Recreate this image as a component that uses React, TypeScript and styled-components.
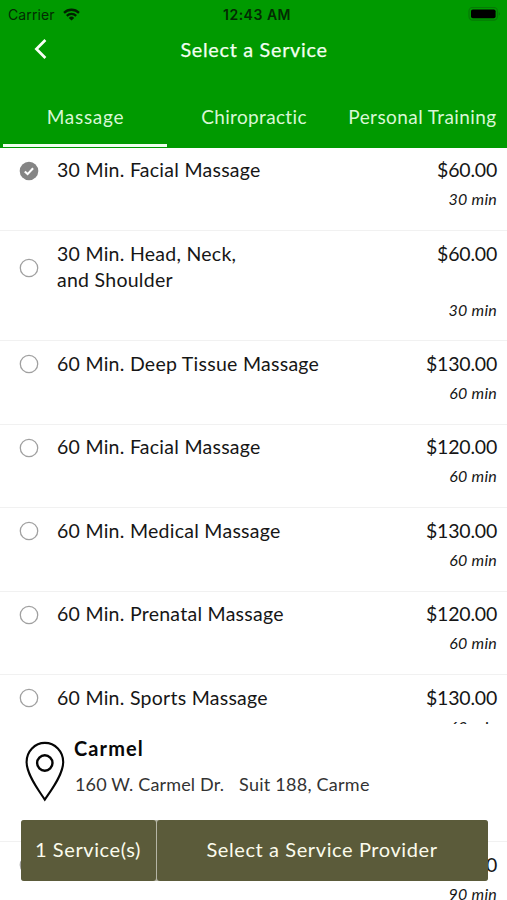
import React from "react";
import styled, { createGlobalStyle } from "styled-components";

const GlobalStyle = createGlobalStyle`
  * { box-sizing: border-box; }
  body { margin: 0; background: #fff; }
  button { font: inherit; color: inherit; background: none; border: 0; padding: 0; }
`;

const Screen = styled.div`
  position: relative;
  width: 507px;
  height: 900px;
  overflow: hidden;
  background: #fff;
  color: #161616;
  font-family: Lato, sans-serif;
`;

const Header = styled.header`
  height: 147.5px;
  background: #009a00;
  color: #f2fff0;
`;

const StatusBar = styled.div`
  display: grid;
  grid-template-columns: 1fr auto 1fr;
  align-items: center;
  height: 28px;
  padding: 0 6px 0 8px;
  font: 400 14px Inter, sans-serif;
  color: #032b03;
`;

const Carrier = styled.div`
  display: flex;
  align-items: center;
  gap: 8px;
  letter-spacing: 0.1px;
`;

const Clock = styled.div`
  font-weight: 600;
  letter-spacing: 0.5px;
  padding-left: 5px;
`;

const BatteryIcon = styled.svg`
  justify-self: end;
`;

const NavBar = styled.div`
  display: grid;
  grid-template-columns: 80px 1fr 80px;
  align-items: center;
  height: 42px;
`;

const BackButton = styled.button`
  display: flex;
  padding-left: 33px;
`;

const Title = styled.h1`
  margin: 0;
  padding-left: 1px;
  text-align: center;
  font-size: 19.8px;
  font-weight: 400;
  letter-spacing: 0.72px;
  line-height: 28px;
  -webkit-text-stroke: 0.25px currentColor;
`;

const Tabs = styled.nav`
  display: grid;
  grid-template-columns: 170px 167px 170px;
  height: 77.5px;
`;

const Tab = styled.button<{ $active?: boolean; $spacing: number }>`
  display: flex;
  align-items: flex-end;
  justify-content: center;
  height: 76.5px;
  margin: 0 3px;
  padding: 0 0 15px 1px;
  border-bottom: 3px solid ${(p) => (p.$active ? "#f0fff0" : "transparent")};
  font-size: 19px;
  line-height: 24px;
  letter-spacing: ${(p) => p.$spacing}px;
  white-space: nowrap;
  color: #d9f7d5;
`;

const ServiceList = styled.main`
  display: flex;
  flex-direction: column;
`;

const ServiceRow = styled.div<{ $tall?: boolean }>`
  display: grid;
  grid-template-columns: 57px 1fr 110px;
  flex: none;
  height: ${(p) => (p.$tall ? 110 : 83.5)}px;
  padding: 9.5px 10px 0 0;
  border-bottom: 1px solid #f1f1f1;
`;

const RadioSlot = styled.div<{ $tall?: boolean }>`
  padding: ${(p) => (p.$tall ? 17 : 3.5)}px 0 0 19px;
  svg { display: block; }
`;

const ServiceName = styled.div`
  font-size: 19.5px;
  line-height: 26.5px;
  letter-spacing: 0.27px;
  white-space: pre-line;
`;

const PriceColumn = styled.div<{ $tall?: boolean }>`
  display: flex;
  flex-direction: column;
  align-items: flex-end;
  gap: ${(p) => (p.$tall ? 32.5 : 5.7)}px;
`;

const Price = styled.div`
  font-size: 19.5px;
  line-height: 26.5px;
  letter-spacing: -0.2px;
`;

const Duration = styled.div`
  font-size: 16px;
  font-style: italic;
  line-height: 20px;
  letter-spacing: 0.22px;
`;

const BookingPanel = styled.section`
  position: absolute;
  left: 0;
  right: 0;
  top: 724px;
`;

const Location = styled.div`
  display: flex;
  height: 96px;
  padding: 12px 0 0 24px;
  gap: 8px;
  background: #fff;
`;

const PinIcon = styled.svg`
  flex: none;
  margin-top: 5px;
`;

const LocationName = styled.div`
  font-size: 20px;
  font-weight: 700;
  line-height: 24px;
  letter-spacing: 1.1px;
  color: #080808;
`;

const Address = styled.div`
  display: flex;
  gap: 15px;
  margin: 12px 0 0 1px;
  font-size: 18px;
  line-height: 24px;
  letter-spacing: 0.15px;
  color: #333;

  span + span { letter-spacing: 0.25px; }
`;

const Actions = styled.div`
  display: grid;
  grid-template-columns: 135px 331px;
  gap: 1px;
  width: 467px;
  margin-left: 20.5px;
  background: #b5b5a5;
  border-radius: 3px;
`;

const ActionButton = styled.button`
  height: 61px;
  padding-bottom: 4px;
  border-radius: 3px;
  background: #5b5b3a;
  color: #fbfbed;
  font-size: 20px;
  letter-spacing: 0.6px;
`;

interface Service {
  name: string;
  price: string;
  duration: string;
  selected?: boolean;
  tall?: boolean;
}

const services: Service[] = [
  { name: "30 Min. Facial Massage", price: "$60.00", duration: "30 min", selected: true },
  { name: "30 Min. Head, Neck,\nand Shoulder", price: "$60.00", duration: "30 min", tall: true },
  { name: "60 Min. Deep Tissue Massage", price: "$130.00", duration: "60 min" },
  { name: "60 Min. Facial Massage", price: "$120.00", duration: "60 min" },
  { name: "60 Min. Medical Massage", price: "$130.00", duration: "60 min" },
  { name: "60 Min. Prenatal Massage", price: "$120.00", duration: "60 min" },
  { name: "60 Min. Sports Massage", price: "$130.00", duration: "60 min" },
  { name: "", price: "", duration: "" },
  { name: "", price: "0", duration: "90 min" },
];

function Radio({ selected }: { selected?: boolean }) {
  return (
    <svg width="20" height="20" viewBox="0 0 20 20" fill="none">
      {selected ? (
        <>
          <circle cx="10" cy="10" r="9.3" fill="#858585" />
          <path d="M5.8 10.4l2.8 2.7 5.5-5.9" stroke="#fff" strokeWidth="2.1" />
        </>
      ) : (
        <circle cx="10" cy="10" r="8.7" stroke="#a0a0a0" strokeWidth="1.3" />
      )}
    </svg>
  );
}

export default function App() {
  return (
    <Screen>
      <GlobalStyle />
      <Header>
        <StatusBar>
          <Carrier>
            Carrier
            <svg width="17" height="13" viewBox="0 0 17 13" fill="none" stroke="#002000" strokeWidth="2.3">
              <path d="M1 4.8a10.8 10.8 0 0 1 15 0" />
              <path d="M3.8 7.8a6.8 6.8 0 0 1 9.4 0" />
              <path d="M8.5 12.6L5.8 9.9a3.9 3.9 0 0 1 5.4 0z" fill="#002000" stroke="none" />
            </svg>
          </Carrier>
          <Clock>12:43 AM</Clock>
          <BatteryIcon width="33" height="15" viewBox="0 0 33 15">
            <rect x="1" y="0.5" width="28.4" height="12.7" rx="3.6" fill="none" stroke="#067a06" strokeWidth="1.2" />
            <rect x="3" y="2.4" width="24.6" height="8.8" rx="1.8" fill="#000" />
            <path d="M30.8 4.8q1.8 2 0 4z" fill="#067006" />
          </BatteryIcon>
        </StatusBar>
        <NavBar>
          <BackButton aria-label="Back">
            <svg width="14" height="22" viewBox="0 0 14 22" fill="none" stroke="#f8fff6" strokeWidth="2.7">
              <path d="M12.4 2L3.4 11l9 9" />
            </svg>
          </BackButton>
          <Title>Select a Service</Title>
        </NavBar>
        <Tabs>
          <Tab $active $spacing={0.7}>Massage</Tab>
          <Tab $spacing={0.34}>Chiropractic</Tab>
          <Tab $spacing={0.42}>Personal Training</Tab>
        </Tabs>
      </Header>
      <ServiceList>
        {services.map((service, i) => (
          <ServiceRow key={i} $tall={service.tall}>
            <RadioSlot $tall={service.tall}>
              <Radio selected={service.selected} />
            </RadioSlot>
            <ServiceName>{service.name}</ServiceName>
            <PriceColumn $tall={service.tall}>
              <Price>{service.price}</Price>
              <Duration>{service.duration}</Duration>
            </PriceColumn>
          </ServiceRow>
        ))}
      </ServiceList>
      <BookingPanel>
        <Location>
          <PinIcon width="42" height="62" viewBox="0 0 42 62" fill="none" stroke="#050505" strokeWidth="2.1">
            <path d="M20.8 58.6C15.5 50.5 2.6 34 2.6 21A18.2 19 0 0 1 39.2 21C39.2 34 26.3 50.5 20.8 58.6Z" />
            <circle cx="20.8" cy="22" r="7.7" strokeWidth="2.4" />
          </PinIcon>
          <div>
            <LocationName>Carmel</LocationName>
            <Address>
              <span>160 W. Carmel Dr.</span>
              <span>Suit 188, Carme</span>
            </Address>
          </div>
        </Location>
        <Actions>
          <ActionButton>1 Service(s)</ActionButton>
          <ActionButton>Select a Service Provider</ActionButton>
        </Actions>
      </BookingPanel>
    </Screen>
  );
}
